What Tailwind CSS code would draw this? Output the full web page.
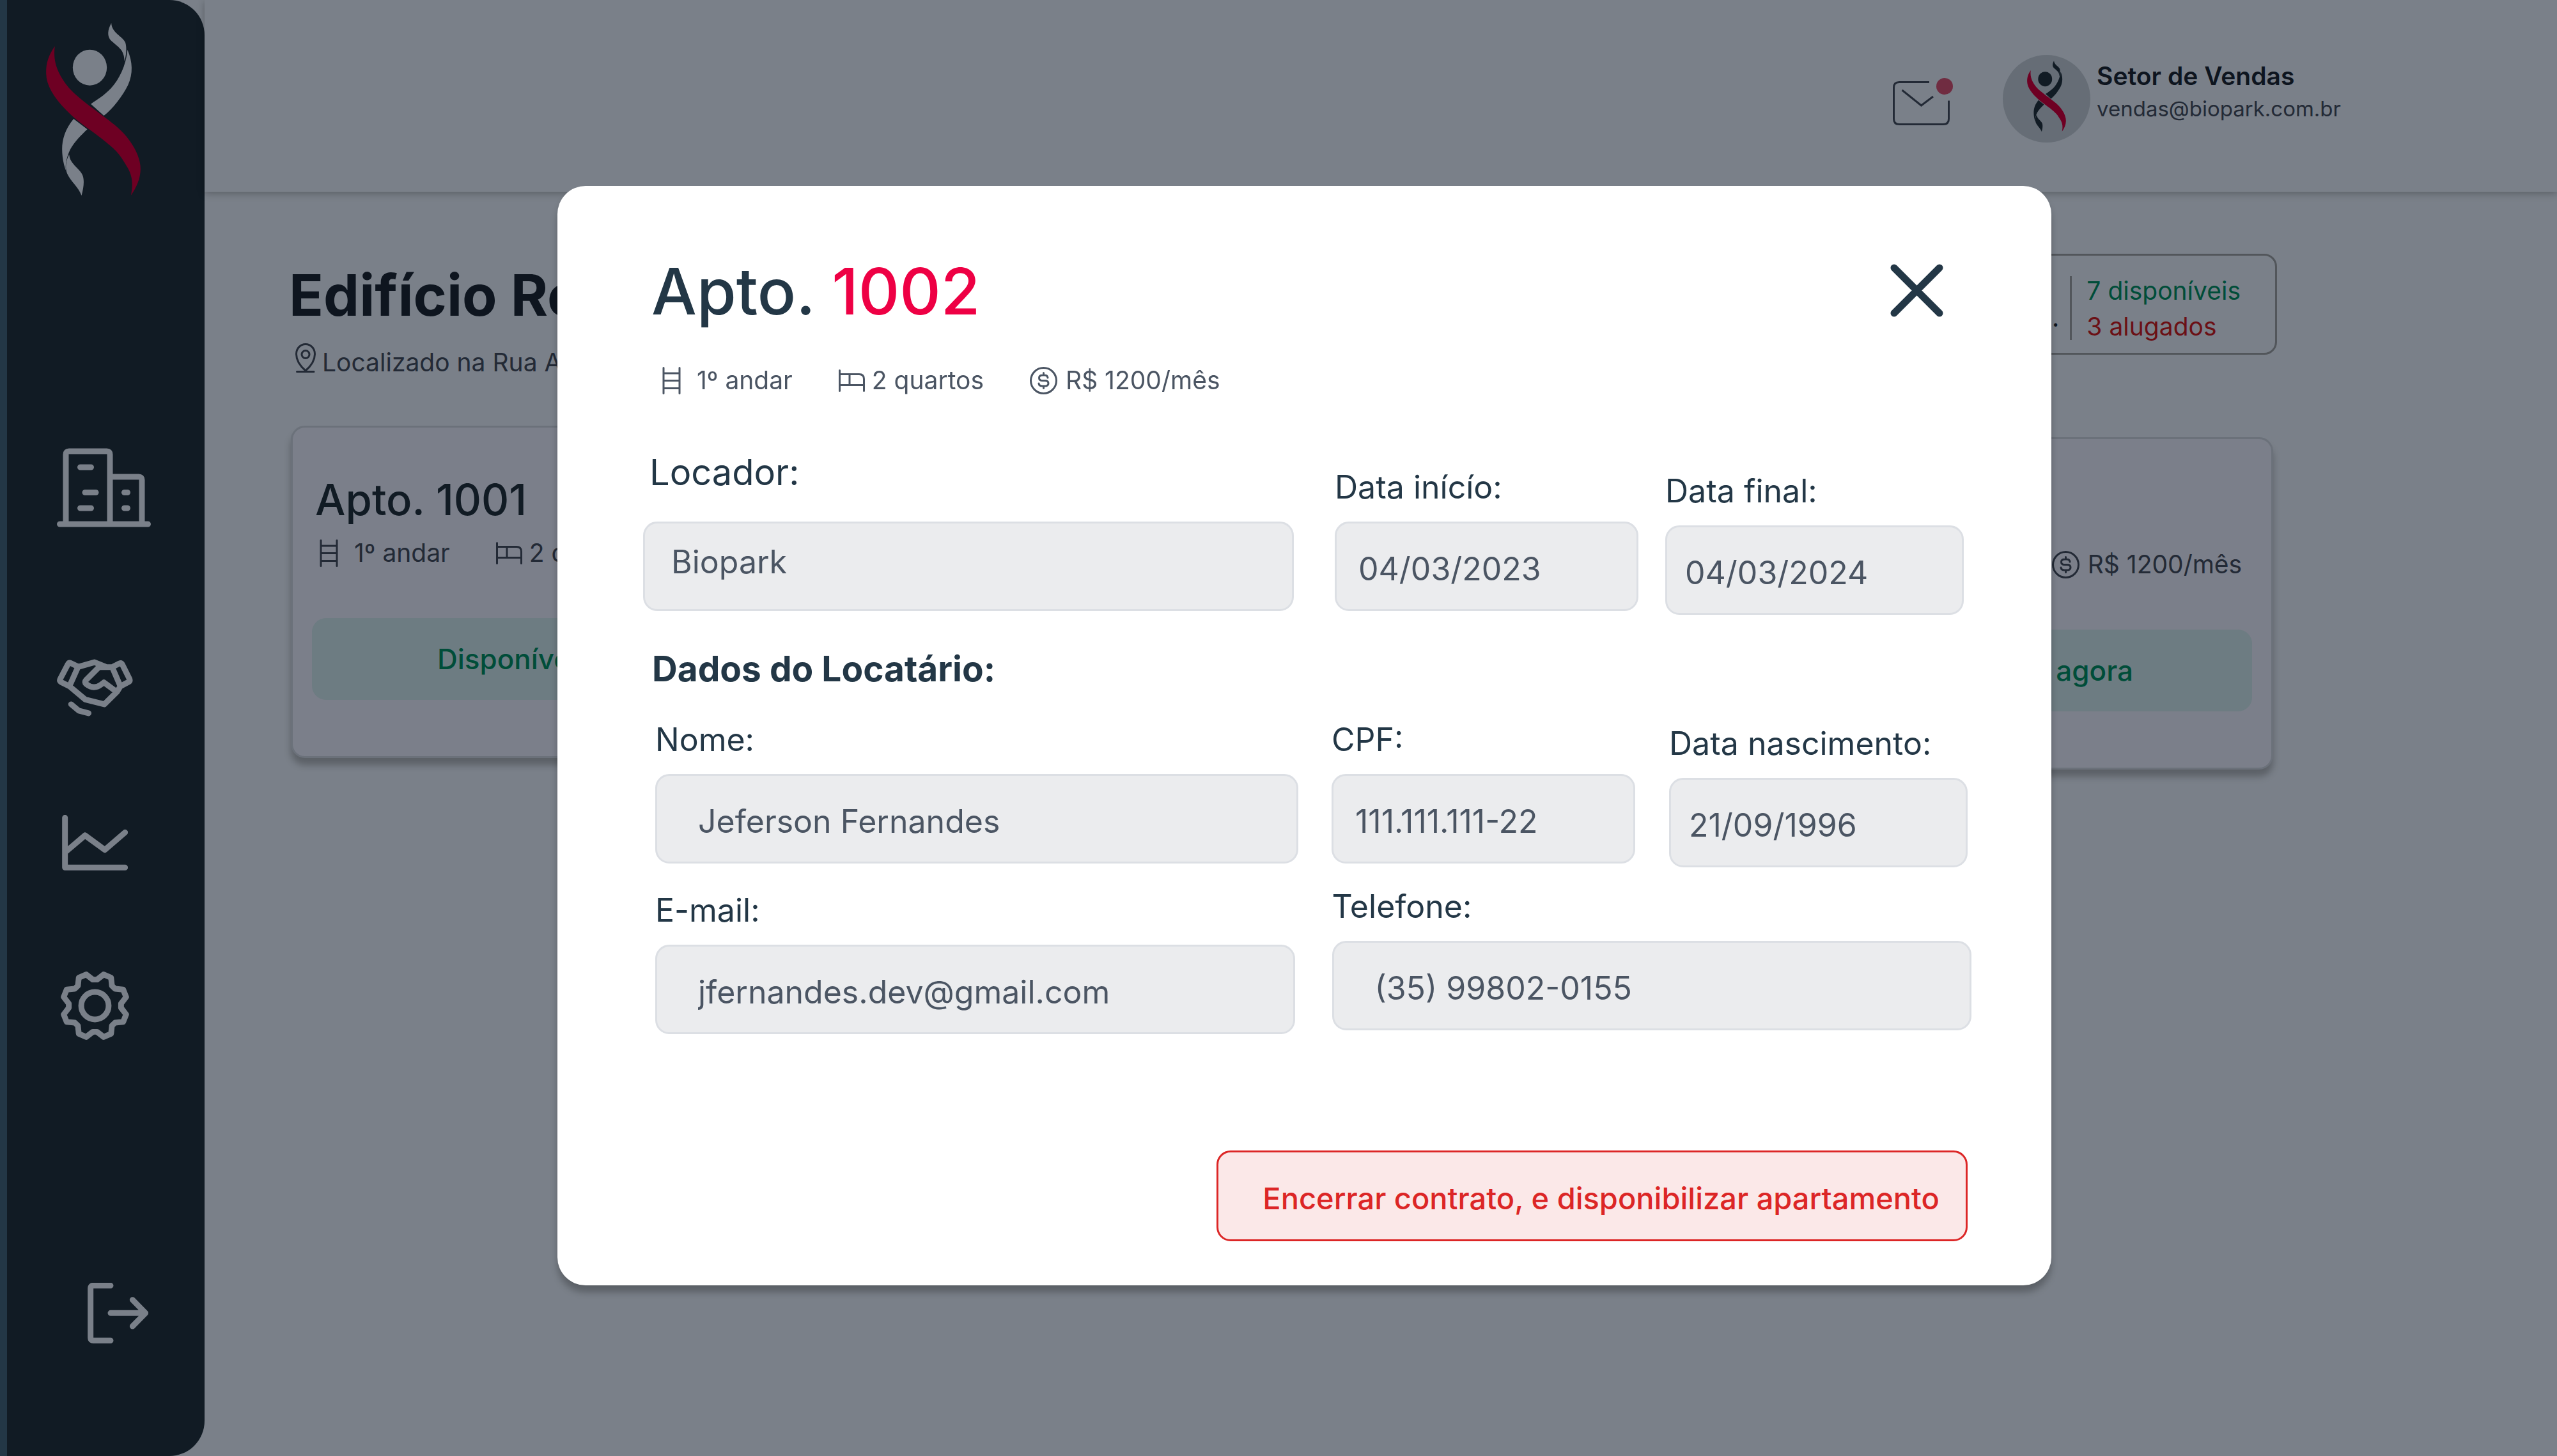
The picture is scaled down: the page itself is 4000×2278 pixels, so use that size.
<!DOCTYPE html>
<html lang="pt-BR">
<head>
<meta charset="utf-8">
<meta name="viewport" content="width=device-width, initial-scale=1">
<title>Biopark - Apto. 1002</title>
<script src="https://cdn.jsdelivr.net/npm/@tailwindcss/browser@4"></script>
</head>
<body class="flex min-h-screen bg-[#7a8089] font-['Inter',sans-serif] text-[39px] leading-[48px] text-[#232a36]">

<!-- Shared icon shapes -->
<svg class="hidden" aria-hidden="true">
  <symbol id="figure" viewBox="216 108 443 810">
    <g fill="currentColor">
      <ellipse cx="421" cy="317" rx="80" ry="84"/>
      <path d="M598 234C590 310 560 370 520 415C490 447 455 468 426 488L487 543C530 510 575 450 600 400C625 345 622 290 598 234Z"/>
      <path d="M522 108C505 140 500 170 522 192C545 212 560 222 572 240C583 260 582 275 584 287C592 260 595 225 588 200C575 170 524 155 522 108Z"/>
      <path d="M345 558C305 605 291 655 291 700C291 740 300 780 309 800C304 770 315 730 330 700C350 665 380 635 409 607Z"/>
      <path d="M324 725C308 755 304 790 315 815C330 850 370 880 382 918C393 880 397 840 385 818C370 788 328 770 324 725Z"/>
    </g>
    <path fill="#6e0023" d="M257 217C225 262 215 300 216 345C217 400 250 455 310 517C370 580 440 618 500 670C560 718 570 740 600 790C622 830 624 870 614 917C640 880 658 840 659 795C660 720 600 640 550 597C490 545 380 475 325 415C280 360 245 300 257 217Z"/>
  </symbol>
  <symbol id="ladder" viewBox="0 0 29 43">
    <path d="M2 1.500V41.500M27 1.500V41.500M2 10H27M2 21.500H27M2 33.500H27" fill="none" stroke="currentColor" stroke-width="3" stroke-linecap="round"/>
  </symbol>
  <symbol id="bed" viewBox="0 0 41 35">
    <path d="M1.500 1.500V33.500M1.500 7.500H32Q39.500 7.500 39.500 15V33.500M1.500 24.500H39.500M17 7.500V24.500" fill="none" stroke="currentColor" stroke-width="3" stroke-linecap="round"/>
  </symbol>
  <symbol id="coin" viewBox="0 0 43 43">
    <g fill="none" stroke="currentColor" stroke-width="3" stroke-linecap="round">
      <circle cx="21.500" cy="21.500" r="20"/>
      <path d="M21.500 9.500V13M21.500 30V33.500M28 17Q27.500 13 23 13H20Q14.500 13 14.500 17.200Q14.500 21.500 20 21.500H23.500Q29 21.500 29 25.700Q29 30 23.500 30H19.500Q14.500 30 14 26"/>
    </g>
  </symbol>
</svg>

<!-- Sidebar -->
<aside class="flex w-[320px] shrink-0 bg-[#7a8089]">
  <div class="w-[11px] bg-[#233746]"></div>
  <nav class="flex flex-1 flex-col items-start rounded-r-[55px] bg-[#111b24] pt-9 text-[#7a8089]" aria-label="Principal">
    <a href="#" aria-label="Biopark" class="ml-[61px]"><svg class="h-[270px] w-[148px]"><use href="#figure"/></svg></a>
    <a href="#" aria-label="Edifícios" class="mt-[395px] ml-[78px]">
      <svg class="h-[124px] w-[147px]" viewBox="89 701 147 124" fill="none" stroke="currentColor" stroke-width="9" stroke-linecap="round"><path d="M93.500 820H231.500M103 820V711Q103 706 108 706H167Q172 706 172 711V820M172 746H217Q222 746 222 751V820M125.500 731H142.500M133 770.500H150M125.500 795H142.500M194.500 770.500H199.500M194.500 795H199.500"/></svg>
    </a>
    <a href="#" aria-label="Contratos" class="mt-[206px] ml-[78px]">
      <svg class="h-[90px] w-[119px]" viewBox="267 1114 358 270" fill="none" stroke="currentColor" stroke-width="27" stroke-linecap="round" stroke-linejoin="round"><path d="M367 1150L334 1134Q324 1129 319 1138L283 1207Q277 1218 287 1223L326 1242ZM527 1152L561 1135Q570 1131 575 1140L608 1206Q613 1217 604 1222L566 1242ZM370 1150L444 1129L500 1152H527M326 1242L400 1304L490 1327L550 1268L566 1242M500 1152H465L404 1213Q395 1223 405 1232Q440 1260 475 1234L488 1224L548 1268M334 1327L370 1357L416 1369"/></svg>
    </a>
    <a href="#" aria-label="Relatórios" class="mt-[154px] ml-[86px]">
      <svg class="h-[87px] w-[103px]" viewBox="291 165 309 261" fill="none" stroke="currentColor" stroke-width="27" stroke-linecap="round" stroke-linejoin="round"><path d="M305 178V412H587M305 341L399 261L492 329L587 247"/></svg>
    </a>
    <a href="#" aria-label="Configurações" class="mt-[158px] ml-[84px]">
      <svg class="size-[107px]" viewBox="-161 -161 322 322" fill="none" stroke="currentColor" stroke-width="27" stroke-linejoin="round"><circle r="64.500"/><path d="M-41-147L-10-123H10L41-147L76-132L80-94L95-80L133-76L147-41L123-10V10L147 41L133 76L95 80L80 94L76 132L41 147L10 123H-10L-41 147L-76 132L-80 94L-95 80L-133 76L-147 41L-123 10V-10L-147-41L-133-76L-95-80L-80-94L-76-132Z"/></svg>
    </a>
    <a href="#" aria-label="Sair" class="mt-auto mb-[176px] ml-[126px]">
      <svg class="size-[95px]" viewBox="411 171 285 285" fill="none" stroke="currentColor" stroke-width="27" stroke-linecap="round" stroke-linejoin="round"><path d="M519 184H437Q425 184 425 196V430Q425 442 437 442H519M519 313H683M622 251L683 313L622 375"/></svg>
    </a>
  </nav>
</aside>

<div class="min-w-0 flex-1">
  <!-- Top bar -->
  <header class="flex h-[300px] items-start justify-end pt-[86px] pr-[338px] shadow-[0_3px_11px_rgba(0,0,0,0.25)]">
    <button type="button" aria-label="Mensagens" class="mt-9 mr-[78px]">
      <svg class="h-[75px] w-[94px]" viewBox="2961 122 94 75" fill="none" stroke="#232a36" stroke-width="3"><path d="M3018 128.500H2971Q2962.500 128.500 2962.500 137V186Q2962.500 194.500 2971 194.500H3040Q3048.500 194.500 3048.500 186V157.500M2975.500 141L3005.500 165L3024 151"/><circle cx="3042" cy="135" r="13" fill="#702c41" stroke="none"/></svg>
    </button>
    <div class="flex size-[137px] items-start justify-center rounded-full bg-[#666d76] pt-[9px] text-[#111b24]"><svg class="h-[111px] w-[61px]"><use href="#figure"/></svg></div>
    <div class="mt-[9px] ml-[10px]">
      <p class="font-semibold text-[#0e151f]">Setor de Vendas</p>
      <p class="mt-[7px] text-[33px] leading-[40px]">vendas@biopark.com.br</p>
    </div>
  </header>

  <main class="pt-[97px] pr-[438px] pl-[132px]">
    <div class="flex items-start justify-between">
      <div class="pt-[11px]">
        <h1 class="text-[89px] leading-[108px] font-bold text-[#0e151f]">Edifício Residencial</h1>
        <p class="mt-[21px] flex items-start gap-[10px] pl-[10px]">
          <svg class="h-[46px] w-[32px]" viewBox="0 0 32 46" fill="none" stroke="currentColor" stroke-width="3" stroke-linecap="round"><path d="M2.500 44.500H29M16 43C8 36 1.500 27 1.500 17C1.500 8 8 1.500 16 1.500S30.500 8 30.500 17C30.500 27 24 36 16 43Z"/><circle cx="16" cy="17.500" r="6"/></svg>
          <span class="mt-[6px]">Localizado na Rua Araucária</span>
        </p>
      </div>
      <div class="flex h-[158px] items-start rounded-[20px] border-[3px] border-[#52565b] pt-[27px] pr-[54px] pl-[56px] leading-[56px]">
        <p class="mt-[42px] text-[#0e151f]">10 aptos.</p>
        <div class="mt-[5px] ml-[17px] h-[100px] w-[3px] bg-[#52565b]"></div>
        <div class="ml-[23px]">
          <p class="text-[#004d39]">7 disponíveis</p>
          <p class="text-[#6b1015]">3 alugados</p>
        </div>
      </div>
    </div>

    <div class="mt-[75px] mr-[6px] ml-[3px] grid grid-cols-3 items-start gap-[101px]">
      <article class="rounded-[22px] border-[3px] border-[#6b717a] bg-[#7b7f8a] pt-[73px] pb-[88px] shadow-[0_11px_11px_rgba(0,0,0,0.25)]">
        <h2 class="pl-[35px] text-[67px] leading-[80px] font-medium text-[#111b24]">Apto. 1001</h2>
        <div class="mt-[19px] flex items-center gap-[72px] pl-[42px] whitespace-nowrap">
          <span class="flex items-center gap-[25px]"><svg class="h-[43px] w-[29px]"><use href="#ladder"/></svg>1º andar</span>
          <span class="flex items-center gap-[11px]"><svg class="h-[35px] w-[41px]"><use href="#bed"/></svg>2 quartos</span>
          <span class="flex items-center gap-[13px]"><svg class="size-[43px]"><use href="#coin"/></svg>R$ 1200/mês</span>
        </div>
        <div class="mx-[30px] mt-[78px] flex"><button type="button" class="h-[128px] flex-1 rounded-[22px] bg-[#6d7c82] pl-[10px] text-[44px] font-medium text-[#004d39]">Disponível, alugue agora</button></div>
      </article>
      <article class="rounded-[22px] border-[3px] border-[#6b717a] bg-[#7b7f8a] pt-[73px] pb-[88px] shadow-[0_11px_11px_rgba(0,0,0,0.25)]">
        <h2 class="pl-[35px] text-[67px] leading-[80px] font-medium text-[#111b24]">Apto. 1002</h2>
        <div class="mt-[19px] flex items-center gap-[72px] pl-[42px] whitespace-nowrap">
          <span class="flex items-center gap-[25px]"><svg class="h-[43px] w-[29px]"><use href="#ladder"/></svg>1º andar</span>
          <span class="flex items-center gap-[11px]"><svg class="h-[35px] w-[41px]"><use href="#bed"/></svg>2 quartos</span>
          <span class="flex items-center gap-[13px]"><svg class="size-[43px]"><use href="#coin"/></svg>R$ 1200/mês</span>
        </div>
        <div class="mx-[30px] mt-[78px] flex"><button type="button" class="h-[128px] flex-1 rounded-[22px] bg-[#7d6c72] text-[44px] font-medium text-[#6b1015]">Alugado</button></div>
      </article>
      <article class="mt-[18px] rounded-[22px] border-[3px] border-[#6b717a] bg-[#7b7f8a] pt-[73px] pb-[88px] shadow-[0_11px_11px_rgba(0,0,0,0.25)]">
        <h2 class="pl-[35px] text-[67px] leading-[80px] font-medium text-[#111b24]">Apto. 1003</h2>
        <div class="mt-[19px] flex items-center gap-[72px] pl-[42px] whitespace-nowrap">
          <span class="flex items-center gap-[25px]"><svg class="h-[43px] w-[29px]"><use href="#ladder"/></svg>1º andar</span>
          <span class="flex items-center gap-[11px]"><svg class="h-[35px] w-[41px]"><use href="#bed"/></svg>2 quartos</span>
          <span class="flex items-center gap-[13px]"><svg class="size-[43px]"><use href="#coin"/></svg>R$ 1200/mês</span>
        </div>
        <div class="mx-[30px] mt-[78px] flex"><button type="button" class="h-[128px] flex-1 rounded-[22px] bg-[#6d7c82] pl-[10px] text-[44px] font-medium text-[#004d39]">Disponível, alugue agora</button></div>
      </article>
    </div>
  </main>
</div>

<!-- Contract dialog -->
<div class="fixed inset-0 flex items-center justify-center pt-[24px] pl-[81px]">
  <section role="dialog" aria-modal="true" aria-labelledby="dialog-title" class="w-[2337px] max-w-full rounded-[44px] bg-white pt-[105px] pb-[69px] text-[50px] leading-[60px] text-[#233746] shadow-[0_11px_11px_rgba(0,0,0,0.25)]">
    <div class="flex items-start justify-between pr-[169px] pl-[147px]">
      <h2 id="dialog-title" class="text-[100px] leading-[120px] font-medium">Apto. <span class="text-[#ee0044]">1002</span></h2>
      <button type="button" aria-label="Fechar" class="mt-[17px]">
        <svg class="size-[83px]" viewBox="0 0 83 83" fill="none" stroke="currentColor" stroke-width="11" stroke-linecap="round"><path d="M6 6L77 77M77 6L6 77"/></svg>
      </button>
    </div>
    <div class="mt-[55px] flex items-center gap-[72px] pl-[164px] text-[39px] leading-[48px] whitespace-nowrap text-[#4b5563]">
      <span class="flex items-center gap-[25px]"><svg class="h-[43px] w-[29px]"><use href="#ladder"/></svg>1º andar</span>
      <span class="flex items-center gap-[11px]"><svg class="h-[35px] w-[41px]"><use href="#bed"/></svg>2 quartos</span>
      <span class="flex items-center gap-[13px]"><svg class="size-[43px]"><use href="#coin"/></svg>R$ 1200/mês</span>
    </div>

    <form class="mt-[86px] pr-[131px] pl-[134px]">
      <div class="flex items-start pr-[6px]">
        <div class="flex min-w-0 flex-1 flex-col gap-[43px]">
          <label for="locador" class="pl-[10px] text-[56px] leading-[68px]">Locador:</label>
          <input id="locador" type="text" readonly value="Biopark" class="h-[140px] w-full rounded-[22px] border-[3px] border-[#dcdfe4] bg-[#ebecee] pr-5 pb-[14px] pl-[41px] text-[#4b5563]">
        </div>
        <div class="mt-[27px] ml-[64px] flex w-[475px] flex-col gap-6">
          <label for="inicio">Data inícío:</label>
          <input id="inicio" type="text" readonly value="04/03/2023" class="h-[140px] w-full rounded-[22px] border-[3px] border-[#dcdfe4] bg-[#ebecee] pt-2 pr-5 pl-[34px] text-[#4b5563]">
        </div>
        <div class="mt-[33px] ml-[42px] flex w-[467px] flex-col gap-6">
          <label for="final">Data final:</label>
          <input id="final" type="text" readonly value="04/03/2024" class="h-[140px] w-full rounded-[22px] border-[3px] border-[#dcdfe4] bg-[#ebecee] pt-2 pr-5 pl-[28px] text-[#4b5563]">
        </div>
      </div>

      <h3 class="mt-[50px] pl-[14px] text-[55px] leading-[68px] font-bold">Dados do Locatário:</h3>

      <div class="mt-[47px] flex items-start pl-[19px]">
        <div class="flex min-w-0 flex-1 flex-col gap-6">
          <label for="nome">Nome:</label>
          <input id="nome" type="text" readonly value="Jeferson Fernandes" class="h-[140px] w-full rounded-[22px] border-[3px] border-[#dcdfe4] bg-[#ebecee] pt-2 pr-5 pl-[64px] text-[#4b5563]">
        </div>
        <div class="ml-[52px] flex w-[475px] flex-col gap-6">
          <label for="cpf">CPF:</label>
          <input id="cpf" type="text" readonly value="111.111.111-22" class="h-[140px] w-full rounded-[22px] border-[3px] border-[#dcdfe4] bg-[#ebecee] pt-2 pr-5 pl-[34px] text-[#4b5563]">
        </div>
        <div class="mt-[6px] ml-[53px] flex w-[467px] flex-col gap-6">
          <label for="nascimento">Data nascimento:</label>
          <input id="nascimento" type="text" readonly value="21/09/1996" class="h-[140px] w-full rounded-[22px] border-[3px] border-[#dcdfe4] bg-[#ebecee] pt-2 pr-5 pl-[28px] text-[#4b5563]">
        </div>
      </div>

      <div class="mt-[31px] -mr-[6px] flex items-start gap-[58px] pl-[19px]">
        <div class="mt-[6px] flex min-w-0 flex-1 flex-col gap-6">
          <label for="email">E-mail:</label>
          <input id="email" type="email" readonly value="jfernandes.dev@gmail.com" class="h-[140px] w-full rounded-[22px] border-[3px] border-[#dcdfe4] bg-[#ebecee] pt-2 pr-5 pl-[64px] text-[#4b5563]">
        </div>
        <div class="flex min-w-0 flex-1 flex-col gap-6">
          <label for="telefone">Telefone:</label>
          <input id="telefone" type="tel" readonly value="(35) 99802-0155" class="h-[140px] w-full rounded-[22px] border-[3px] border-[#dcdfe4] bg-[#ebecee] pt-2 pr-5 pl-[64px] text-[#4b5563]">
        </div>
      </div>

      <div class="mt-[182px] flex justify-end">
        <button type="button" class="h-[142px] rounded-[22px] border-[3px] border-[#dc2626] bg-[#fbe8e8] pt-2 pr-[41px] pl-[69px] text-[47px] font-medium text-[#dc2626]">Encerrar contrato, e disponibilizar apartamento</button>
      </div>
    </form>
  </section>
</div>
</body>
</html>
